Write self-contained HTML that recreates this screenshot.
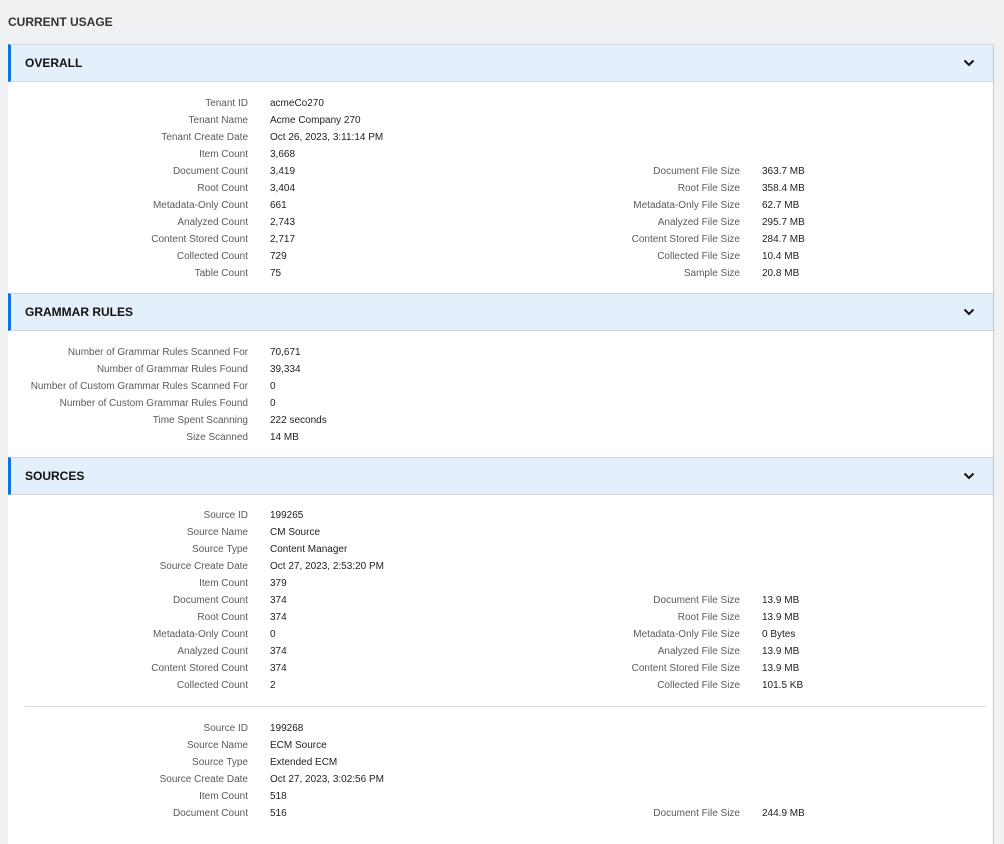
<!DOCTYPE html>
<html><head><meta charset="utf-8"><style>
*{margin:0;padding:0;box-sizing:border-box}
body{width:1004px;height:819px;overflow:hidden;background:#f0f1f3;font-family:"Liberation Sans",sans-serif;position:relative}
.title{position:absolute;left:8px;top:15px;font-size:12px;font-weight:bold;color:#333}
.panel{position:absolute;left:8px;width:986px;background:#fff;border-right:1px solid #c8c8c8;top:44px;height:800px}
.hdr{position:absolute;left:8px;width:985px;height:38px;background:#e3effb;border-top:1px solid #d4d8dc;border-bottom:1px solid #d4d8dc;border-left:3px solid #0a74e0}
.hdr span{position:absolute;left:14px;top:11px;font-size:12px;font-weight:bold;color:#111}
.hdr svg{position:absolute;left:952px;top:14px}
.rows{position:absolute;left:0;width:1004px}
.r{position:relative;height:17px;line-height:17px;font-size:10px}
.l,.l2{position:absolute;color:#5a5a5a;white-space:nowrap;text-align:right}
.l{right:756px}.l2{right:264px}
.v,.v2{position:absolute;color:#222;white-space:nowrap}
.v{left:270px}.v2{left:762px}
.sep{position:absolute;left:25px;width:961px;top:706px;height:1px;background:#dcdcdc}
</style></head><body>
<div class="title">CURRENT USAGE</div>
<div class="panel"></div>
<div class="hdr" style="top:44px"><span>OVERALL</span><svg width="12" height="8" viewBox="0 0 12 8"><path d="M1.5 1.5L6 6L10.5 1.5" fill="none" stroke="#111" stroke-width="2"/></svg></div>
<div class="rows" style="top:95px">
<div class="r"><span class="l">Tenant ID</span><span class="v">acmeCo270</span></div>
<div class="r"><span class="l">Tenant Name</span><span class="v">Acme Company 270</span></div>
<div class="r"><span class="l">Tenant Create Date</span><span class="v">Oct 26, 2023, 3:11:14 PM</span></div>
<div class="r"><span class="l">Item Count</span><span class="v">3,668</span></div>
<div class="r"><span class="l">Document Count</span><span class="v">3,419</span><span class="l2">Document File Size</span><span class="v2">363.7 MB</span></div>
<div class="r"><span class="l">Root Count</span><span class="v">3,404</span><span class="l2">Root File Size</span><span class="v2">358.4 MB</span></div>
<div class="r"><span class="l">Metadata-Only Count</span><span class="v">661</span><span class="l2">Metadata-Only File Size</span><span class="v2">62.7 MB</span></div>
<div class="r"><span class="l">Analyzed Count</span><span class="v">2,743</span><span class="l2">Analyzed File Size</span><span class="v2">295.7 MB</span></div>
<div class="r"><span class="l">Content Stored Count</span><span class="v">2,717</span><span class="l2">Content Stored File Size</span><span class="v2">284.7 MB</span></div>
<div class="r"><span class="l">Collected Count</span><span class="v">729</span><span class="l2">Collected File Size</span><span class="v2">10.4 MB</span></div>
<div class="r"><span class="l">Table Count</span><span class="v">75</span><span class="l2">Sample Size</span><span class="v2">20.8 MB</span></div>
</div>
<div class="hdr" style="top:293px"><span>GRAMMAR RULES</span><svg width="12" height="8" viewBox="0 0 12 8"><path d="M1.5 1.5L6 6L10.5 1.5" fill="none" stroke="#111" stroke-width="2"/></svg></div>
<div class="rows" style="top:344px">
<div class="r"><span class="l">Number of Grammar Rules Scanned For</span><span class="v">70,671</span></div>
<div class="r"><span class="l">Number of Grammar Rules Found</span><span class="v">39,334</span></div>
<div class="r"><span class="l">Number of Custom Grammar Rules Scanned For</span><span class="v">0</span></div>
<div class="r"><span class="l">Number of Custom Grammar Rules Found</span><span class="v">0</span></div>
<div class="r"><span class="l">Time Spent Scanning</span><span class="v">222 seconds</span></div>
<div class="r"><span class="l">Size Scanned</span><span class="v">14 MB</span></div>
</div>
<div class="hdr" style="top:457px"><span>SOURCES</span><svg width="12" height="8" viewBox="0 0 12 8"><path d="M1.5 1.5L6 6L10.5 1.5" fill="none" stroke="#111" stroke-width="2"/></svg></div>
<div class="rows" style="top:507px">
<div class="r"><span class="l">Source ID</span><span class="v">199265</span></div>
<div class="r"><span class="l">Source Name</span><span class="v">CM Source</span></div>
<div class="r"><span class="l">Source Type</span><span class="v">Content Manager</span></div>
<div class="r"><span class="l">Source Create Date</span><span class="v">Oct 27, 2023, 2:53:20 PM</span></div>
<div class="r"><span class="l">Item Count</span><span class="v">379</span></div>
<div class="r"><span class="l">Document Count</span><span class="v">374</span><span class="l2">Document File Size</span><span class="v2">13.9 MB</span></div>
<div class="r"><span class="l">Root Count</span><span class="v">374</span><span class="l2">Root File Size</span><span class="v2">13.9 MB</span></div>
<div class="r"><span class="l">Metadata-Only Count</span><span class="v">0</span><span class="l2">Metadata-Only File Size</span><span class="v2">0 Bytes</span></div>
<div class="r"><span class="l">Analyzed Count</span><span class="v">374</span><span class="l2">Analyzed File Size</span><span class="v2">13.9 MB</span></div>
<div class="r"><span class="l">Content Stored Count</span><span class="v">374</span><span class="l2">Content Stored File Size</span><span class="v2">13.9 MB</span></div>
<div class="r"><span class="l">Collected Count</span><span class="v">2</span><span class="l2">Collected File Size</span><span class="v2">101.5 KB</span></div>
</div>
<div class="sep"></div>
<div class="rows" style="top:720px">
<div class="r"><span class="l">Source ID</span><span class="v">199268</span></div>
<div class="r"><span class="l">Source Name</span><span class="v">ECM Source</span></div>
<div class="r"><span class="l">Source Type</span><span class="v">Extended ECM</span></div>
<div class="r"><span class="l">Source Create Date</span><span class="v">Oct 27, 2023, 3:02:56 PM</span></div>
<div class="r"><span class="l">Item Count</span><span class="v">518</span></div>
<div class="r"><span class="l">Document Count</span><span class="v">516</span><span class="l2">Document File Size</span><span class="v2">244.9 MB</span></div>
</div>
</body></html>
